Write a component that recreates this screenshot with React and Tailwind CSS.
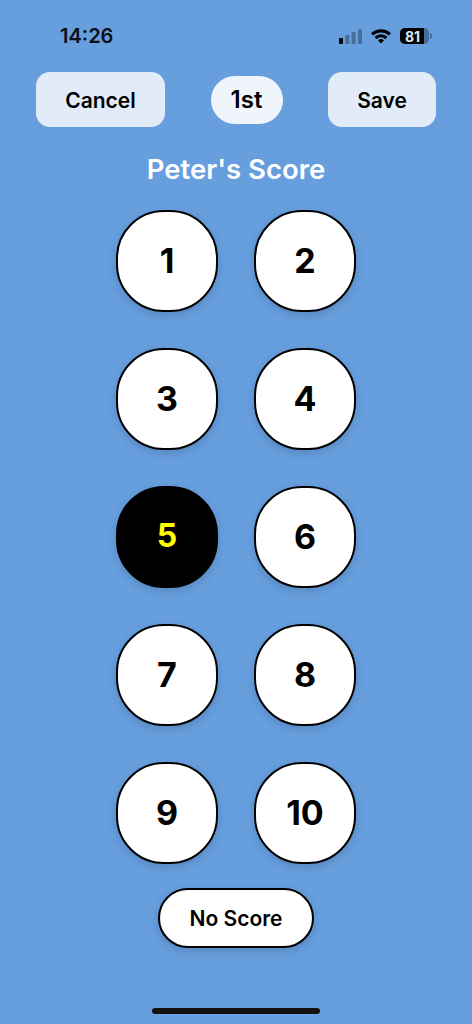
const scores = [1, 2, 3, 4, 5, 6, 7, 8, 9, 10];

function StatusIcons() {
  return (
    <div className="flex items-center">
      <svg width="23" height="15" viewBox="0 0 23 15" className="mr-[9px]">
        <rect x="0" y="9" width="4" height="6" rx="1" fill="#000" />
        <rect x="6.3" y="6" width="4" height="9" rx="1" fill="#000" fillOpacity="0.3" />
        <rect x="12.6" y="3" width="4" height="12" rx="1" fill="#000" fillOpacity="0.3" />
        <rect x="19" y="0" width="4" height="15" rx="1" fill="#000" fillOpacity="0.3" />
      </svg>
      <svg width="20" height="16" viewBox="0 0 21 16" className="mr-[9px]">
        <path d="M0 5.2 A14.8 14.8 0 0 1 21 5.2 L18.7 7.6 A11.6 11.6 0 0 0 2.3 7.6 Z" fill="#000" />
        <path d="M3.7 9 A9.5 9.5 0 0 1 17.3 9 L15 11.3 A6.3 6.3 0 0 0 6 11.3 Z" fill="#000" />
        <path d="M7.4 12.7 A4.4 4.4 0 0 1 13.6 12.7 L10.5 16 Z" fill="#000" />
      </svg>
      <div className="relative flex items-center">
        <div className="w-[29px] h-[16px] rounded-[5px] bg-black/30 overflow-hidden">
          <div className="w-[24px] h-full bg-black" />
        </div>
        <div className="absolute left-0 top-0 w-[24px] h-[16px] pl-[1px] flex items-center justify-center text-[14px] font-bold text-[#dbe8f8]">
          81
        </div>
        <div className="ml-[1px] w-[2px] h-[6px] rounded-r-full bg-black/30" />
      </div>
    </div>
  );
}

export default function App() {
  return (
    <div className="w-[472px] h-[1024px] bg-[#669ede] flex flex-col font-['Inter',sans-serif] overflow-hidden">
      <div className="h-[72px] pl-[60px] pr-[40px] pt-[22px] flex justify-between items-start">
        <span className="text-[20px] leading-[28px] font-semibold text-[#0a0f16]">14:26</span>
        <div className="h-[28px] flex items-center">
          <StatusIcons />
        </div>
      </div>

      <div className="h-[55px] px-[36px] flex items-center justify-between">
        <button className="w-[129px] h-[55px] pt-[2px] rounded-[14px] bg-[#e1ecf8] text-[21px] font-semibold text-black">
          Cancel
        </button>
        <div className="w-[72px] h-[48px] rounded-full bg-[#f0f5fc] flex items-center justify-center text-[24px] font-semibold text-black">
          1st
        </div>
        <button className="w-[108px] h-[55px] pt-[2px] rounded-[14px] bg-[#e1ecf8] text-[21px] font-semibold text-black">
          Save
        </button>
      </div>

      <h1 className="mt-[24px] h-[36px] leading-[36px] text-center text-[27.5px] font-semibold text-white">
        Peter's Score
      </h1>

      <div className="mt-[23px] mx-auto grid grid-cols-[102px_102px] gap-[36px]">
        {scores.map((n) => (
          <button
            key={n}
            className={
              n === 5
                ? "w-[102px] h-[102px] pb-[2px] rounded-[48px] border-2 border-black bg-black text-[yellow] text-[32px] font-bold shadow-[0_3px_8px_rgba(0,0,0,0.15)]"
                : "w-[102px] h-[102px] pb-[2px] rounded-[48px] border-[2.5px] border-black bg-white text-black text-[34px] font-bold shadow-[0_3px_8px_rgba(0,0,0,0.15)]"
            }
          >
            {n}
          </button>
        ))}
      </div>

      <button className="mt-[24px] mx-auto w-[156px] h-[60px] pt-[1px] rounded-[30px] border-[2.5px] border-black bg-white text-[21px] font-semibold text-black shadow-[0_3px_8px_rgba(0,0,0,0.15)]">
        No Score
      </button>

      <div className="mt-[60px] mx-auto w-[168px] h-[6px] rounded-full bg-[#111]" />
    </div>
  );
}
